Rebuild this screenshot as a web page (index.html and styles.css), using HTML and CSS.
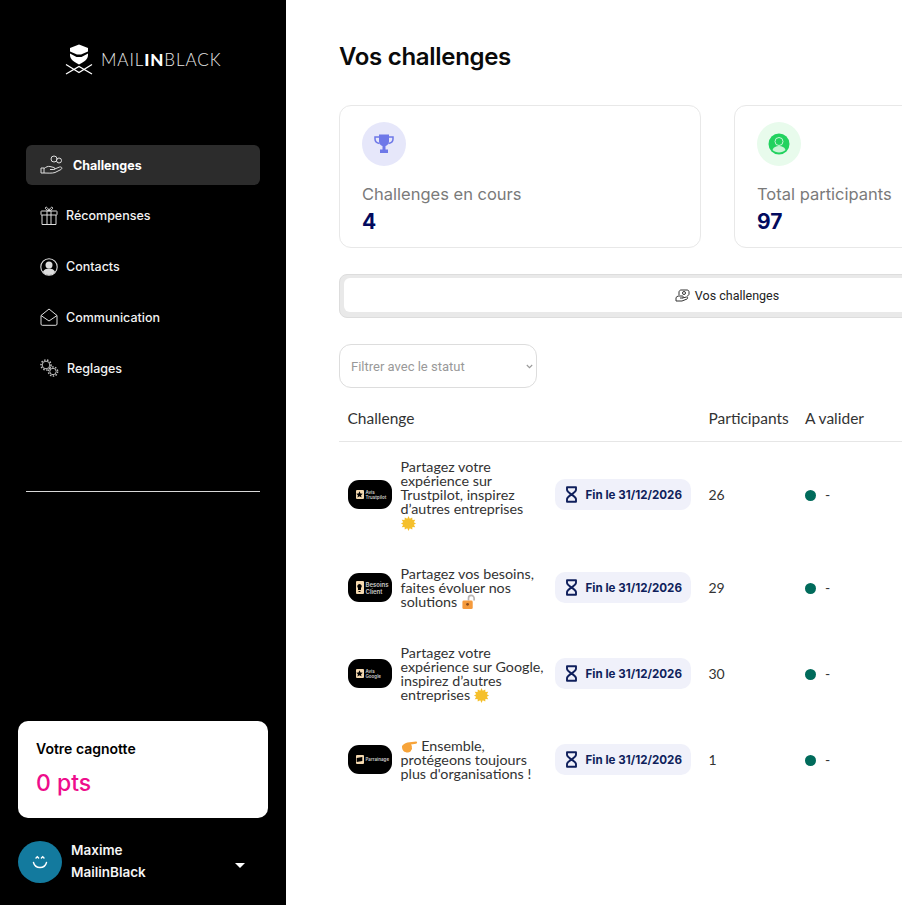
FILE: index.html
```html
<!DOCTYPE HTML>
<html lang="en">
  <head>
    <title>Vos challenges</title>
    <meta charset="utf-8">
    <link rel="stylesheet" href="styles.css">
  </head>
  <body>

  <div class="sidebar">
    <div class="brand">
      <svg class="brand-mark" width="28" height="31" viewBox="0 0 28 31">
        <path d="M5 4l9-3.500L23 4v7c0 4.500-4 7-9 9.500C9 18 5 15.500 5 11z" fill="#fff"/>
        <path d="M5 7.500l7 3h4l7-3v2l-6.500 3.500h-5L5 9.500z" fill="#000"/>
        <path d="M1 20.500l13 8 13-8M1 30l13-7.500L27 30" fill="none" stroke="#fff" stroke-width="1.300"/>
      </svg>
      <span class="brand-name">MAIL<b>IN</b>BLACK</span>
    </div>

    <div class="nav">
      <a class="nav-item active">
        <svg width="24" height="20" viewBox="0 0 24 20" fill="none" stroke="#ddd" stroke-width="1">
          <path d="M1 13h3v5H1zM4 13.500c2-1.500 4-2.500 6-2l4 1c1.500.5 1 2-.5 2H10M13.500 14.500l6-2.500c2.500-.5 3 1.500 1.500 2.500l-6 3c-3 1-7 .5-11 .5"/>
          <circle cx="14" cy="4" r="3"/>
          <circle cx="19" cy="5.500" r="2.500"/>
        </svg>
        <span>Challenges</span>
      </a>
      <a class="nav-item">
        <svg width="18" height="20" viewBox="0 0 18 20" fill="none" stroke="#ddd" stroke-width="1">
          <rect x="1" y="5" width="16" height="4" rx=".5"/>
          <path d="M2 9v9.500h14V9M7 5v13.500M11 5v13.500M9 5C6 4 5 2.500 5.500 1.500 6.500.5 8 2 9 5c1-3 2.500-4.500 3.500-3.500C13 2.500 12 4 9 5z"/>
        </svg>
        <span>Récompenses</span>
      </a>
      <a class="nav-item">
        <svg width="18" height="18" viewBox="0 0 18 18">
          <circle cx="9" cy="9" r="8.200" fill="none" stroke="#ddd" stroke-width="1.100"/>
          <circle cx="9" cy="7" r="3.500" fill="#ddd"/>
          <path d="M2.800 14c1-2.500 3.500-3.500 6.200-3.500s5.200 1 6.200 3.500c-1.500 2-3.700 3-6.200 3s-4.700-1-6.200-3z" fill="#ddd"/>
        </svg>
        <span>Contacts</span>
      </a>
      <a class="nav-item">
        <svg width="18" height="18" viewBox="0 0 18 18" fill="none" stroke="#ddd" stroke-width="1">
          <path d="M1 7.500L9 1l8 6.500V16c0 .8-.5 1.300-1.300 1.300H2.300C1.500 17.300 1 16.800 1 16z"/>
          <path d="M1 7.500l8 5.500 8-5.500"/>
        </svg>
        <span>Communication</span>
      </a>
      <a class="nav-item">
        <svg width="19" height="18" viewBox="0 0 19 18" fill="none" stroke="#bbb">
          <circle cx="6" cy="6" r="3.800" stroke-width="1"/>
          <circle cx="6" cy="6" r="5" stroke-width="1.600" stroke-dasharray="1.500 1.500"/>
          <circle cx="13" cy="12.500" r="3.200" stroke-width="1"/>
          <circle cx="13" cy="12.500" r="4.600" stroke-width="1.500" stroke-dasharray="1.500 1.400"/>
        </svg>
        <span>Reglages</span>
      </a>
    </div>

    <div class="sidebar-line"></div>

    <div class="wallet">
      <div class="wallet-title">Votre cagnotte</div>
      <div class="wallet-points">0 pts</div>
    </div>

    <div class="user">
      <div class="avatar">
        <svg width="18" height="16" viewBox="0 0 18 16" fill="none" stroke="#fff" stroke-width="1.400" stroke-linecap="round">
          <path d="M5 4l1.300-1.300L7.600 4M10.400 4l1.300-1.300L13 4M2.500 8.500c.8 3 3.500 5 6.500 5s5.700-2 6.500-5"/>
        </svg>
      </div>
      <div class="user-name">Maxime<br>MailinBlack</div>
      <div class="caret"></div>
    </div>
  </div>

  <div class="main">
    <div class="content">
      <h1>Vos challenges</h1>

      <div class="stats">
        <div class="stat">
          <div class="stat-icon purple">
            <svg width="20" height="20" viewBox="0 0 20 20" fill="#6e78e8">
              <path d="M5 .5h10v7c0 2.500-2 4-3.500 4.500v3.500H14V19H6v-3.500h2.500V12C7 11.500 5 10 5 7.500z"/>
              <path d="M5 3H1v2c0 2.500 2 4 4.500 4.500M15 3h4v2c0 2.500-2 4-4.500 4.500" fill="none" stroke="#6e78e8" stroke-width="1.500"/>
            </svg>
          </div>
          <div class="stat-label">Challenges en cours</div>
          <div class="stat-value">4</div>
        </div>
        <div class="stat">
          <div class="stat-icon green">
            <svg width="22" height="22" viewBox="0 0 22 22">
              <circle cx="11" cy="11" r="10.500" fill="#22d25f"/>
              <path d="M4.500 17c1-3 3.500-4 6.500-4s5.500 1 6.500 4c-1.500 1.500-4 2.500-6.500 2.500s-5-1-6.500-2.500z" fill="#c9f5d6"/>
              <circle cx="11" cy="8.500" r="4" fill="#22d25f" stroke="#c9f5d6"/>
            </svg>
          </div>
          <div class="stat-label">Total participants</div>
          <div class="stat-value">97</div>
        </div>
      </div>

      <div class="tabs">
        <div class="tab">
          <svg width="15" height="13" viewBox="0 0 15 13" fill="none" stroke="#333" stroke-width="1">
            <path d="M1 12V8.500l2-1.500h4.500c1 0 1 2 0 2H5M7.500 9l4-1c1.500 0 1.500 1.500.5 2l-5 2H1"/>
            <path d="M4 6V3c0-1 1-2 2-2h6c1.500 0 2 1 2 2v2c0 1-1 2-2 2"/>
            <circle cx="9" cy="4" r="1.500"/>
          </svg>
          Vos challenges
        </div>
      </div>

      <div class="filter-wrap">
        <select class="filter">
          <option>Filtrer avec le statut</option>
        </select>
        <svg class="filter-arrow" width="7" height="5" viewBox="0 0 7 5"><path d="M.8 1l2.700 2.700L6.200 1" fill="none" stroke="#999" stroke-width="1.100"/></svg>
      </div>

      <table class="challenges">
        <thead>
          <tr>
            <th class="col-challenge">Challenge</th>
            <th class="col-count">Participants</th>
            <th>A valider</th>
          </tr>
        </thead>
        <tbody>
          <tr>
            <td>
              <div class="challenge">
                <div class="thumb">
                  <i class="thumb-icon"><svg width="7" height="7" viewBox="0 0 10 10"><path d="M5 .5l1.400 3 3.300.3-2.500 2.200.8 3.300L5 7.500 2 9.300l.8-3.300L.3 3.800l3.300-.3z" fill="#000"/></svg></i>
                  <span>Avis<br>Trustpilot</span>
                </div>
                <div class="challenge-text">Partagez votre expérience sur Trustpilot, inspirez d’autres entreprises<br><svg class="emoji" width="15" height="15" viewBox="0 0 16 16"><use href="#sun"/></svg></div>
                <div class="due">
                  <svg width="13" height="17" viewBox="0 0 13 17"><use href="#hourglass"/></svg>
                  Fin le 31/12/2026
                </div>
              </div>
            </td>
            <td>26</td>
            <td><span class="dot"></span>-</td>
          </tr>
          <tr>
            <td>
              <div class="challenge">
                <div class="thumb large">
                  <i class="thumb-icon tall"><svg width="7" height="10" viewBox="0 0 7 10"><path d="M3.500 1a2.300 2.300 0 0 1 1.500 4v2H2V5a2.300 2.300 0 0 1 1.500-4zM2.500 8h2v1h-2z" fill="#000"/></svg></i>
                  <span>Besoins<br>Client</span>
                </div>
                <div class="challenge-text">Partagez vos besoins, faites évoluer nos solutions <svg class="emoji" width="15" height="16" viewBox="0 0 16 17"><path d="M8 7V4.500a3 3 0 0 1 6 0V7" fill="none" stroke="#b9b4b4" stroke-width="1.800"/><rect x="1.500" y="7" width="11" height="9" rx="1.500" fill="#f59a3c"/><circle cx="7" cy="11" r="1.500" fill="#8a4a1a"/></svg></div>
                <div class="due">
                  <svg width="13" height="17" viewBox="0 0 13 17"><use href="#hourglass"/></svg>
                  Fin le 31/12/2026
                </div>
              </div>
            </td>
            <td>29</td>
            <td><span class="dot"></span>-</td>
          </tr>
          <tr>
            <td>
              <div class="challenge">
                <div class="thumb">
                  <i class="thumb-icon"><svg width="7" height="7" viewBox="0 0 10 10"><path d="M5 .5l1.400 3 3.300.3-2.500 2.200.8 3.300L5 7.500 2 9.300l.8-3.300L.3 3.800l3.300-.3z" fill="#000"/></svg></i>
                  <span>Avis<br>Google</span>
                </div>
                <div class="challenge-text">Partagez votre expérience sur Google, inspirez d’autres entreprises <svg class="emoji" width="15" height="15" viewBox="0 0 16 16"><use href="#sun"/></svg></div>
                <div class="due">
                  <svg width="13" height="17" viewBox="0 0 13 17"><use href="#hourglass"/></svg>
                  Fin le 31/12/2026
                </div>
              </div>
            </td>
            <td>30</td>
            <td><span class="dot"></span>-</td>
          </tr>
          <tr>
            <td>
              <div class="challenge">
                <div class="thumb">
                  <i class="thumb-icon"><svg width="7" height="7" viewBox="0 0 10 10"><path d="M1 3l8-1.500V7L1 8.500z" fill="#000"/></svg></i>
                  <span>Parrainage</span>
                </div>
                <div class="challenge-text"><svg class="emoji" width="17" height="14" viewBox="0 0 17 14"><path d="M1 6c1.500-2 3.500-3 5.500-3.500L15 1.500c1.500 0 1.500 2 0 2.200L10 4.500c.8.800 1 2 .8 3 .5 1 .2 2-.5 2.500-.3 1.500-1.500 2.500-3.500 2.500-3.500 0-6-2-5.800-6.500z" fill="#f7a43a"/></svg> Ensemble, protégeons toujours plus d'organisations !</div>
                <div class="due">
                  <svg width="13" height="17" viewBox="0 0 13 17"><use href="#hourglass"/></svg>
                  Fin le 31/12/2026
                </div>
              </div>
            </td>
            <td>1</td>
            <td><span class="dot"></span>-</td>
          </tr>
        </tbody>
      </table>
    </div>
  </div>

  <svg class="defs" width="0" height="0">
    <symbol id="sun" viewBox="0 0 16 16">
      <path d="M8 0l1.300 3L12 1.500l.2 2.800 3-.2-1.500 2.600L16 8l-2.300 1.300 1.500 2.600-3-.2-.2 2.800L9.300 13 8 16l-1.300-3L4 14.500l-.2-2.800-3 .2 1.500-2.600L0 8l2.300-1.300L.8 4.100l3 .2L4 1.500 6.700 3z" fill="#f5c02c"/>
    </symbol>
    <symbol id="hourglass" viewBox="0 0 13 17">
      <path d="M2 1.200h9v2.600c0 2-2.500 3.200-4.500 4.700C4.500 7 2 5.800 2 3.800zM2 15.800h9v-2.600c0-2-2.500-3.200-4.500-4.700C4.500 10 2 11.200 2 13.200z" fill="none" stroke="#0f1f5c" stroke-width="1.900" stroke-linejoin="round"/>
    </symbol>
  </svg>

  </body>
</html>
```

FILE: styles.css
```css
html {
  height: 100%;
}
body {
  margin: 0;
  padding: 0;
  height: 100%;
  display: flex;
  overflow: hidden;
  background: #ffffff;
  color: #333333;
  font-family: "Lato", sans-serif;
}

.defs {
  position: absolute;
}

/* sidebar */
.sidebar {
  width: 286px;
  flex: none;
  box-sizing: border-box;
  height: 905px;
  padding: 44px 18px 22px;
  display: flex;
  flex-direction: column;
  background: #000000;
  color: #ffffff;
  font-family: "Inter", sans-serif;
}

.brand {
  display: flex;
  align-items: center;
  padding-left: 47px;
  gap: 8px;
  height: 31px;
}
.brand-name {
  font-family: "Lato", sans-serif;
  font-weight: 300;
  font-size: 17px;
  letter-spacing: 0.900px;
  color: #e8e8e8;
}
.brand-name b {
  font-weight: 900;
  color: #ffffff;
}

.nav {
  margin: 70px 8px 0;
  display: flex;
  flex-direction: column;
  gap: 10.800px;
}
.nav-item {
  height: 40px;
  padding-left: 14px;
  display: flex;
  align-items: center;
  gap: 8px;
  border-radius: 6px;
  font-size: 12.500px;
  font-weight: 500;
  color: #f2f2f2;
}
.nav-item.active {
  background: #2c2c2c;
  font-weight: 700;
  color: #ffffff;
  gap: 9px;
}

.sidebar-line {
  margin: 103px 8px 0;
  height: 1px;
  background: #d8d8d8;
}

.wallet {
  margin-top: auto;
  height: 97px;
  box-sizing: border-box;
  padding: 20px 18px;
  border-radius: 10px;
  background: #ffffff;
  color: #000000;
}
.wallet-title {
  font-size: 14px;
  font-weight: 600;
  line-height: 16px;
}
.wallet-points {
  margin-top: 12px;
  font-size: 23px;
  font-weight: 500;
  line-height: 28px;
  color: #ee0d8c;
}

.user {
  margin-top: 21px;
  display: flex;
  align-items: center;
  gap: 9px;
}
.avatar {
  width: 44px;
  height: 42px;
  flex: none;
  margin-top: 2px;
  display: flex;
  align-items: center;
  justify-content: center;
  border-radius: 50%;
  background: #137a9e;
}
.user-name {
  font-size: 13.500px;
  font-weight: 600;
  line-height: 22px;
  color: #f5f5f5;
}
.caret {
  margin: 8px 23px 0 auto;
  width: 0;
  height: 0;
  border-left: 5px solid transparent;
  border-right: 5px solid transparent;
  border-top: 5px solid #ffffff;
}

/* main part */
.main {
  flex: 1;
  min-width: 0;
  overflow: hidden;
  padding-left: 53px;
}
.content {
  width: 776px;
}

h1 {
  margin: 41px 0 0;
  font-family: "Inter", sans-serif;
  font-size: 24px;
  font-weight: 600;
  line-height: 32px;
  letter-spacing: -0.300px;
  color: #0a0a0a;
}

.stats {
  margin-top: 32px;
  display: flex;
  gap: 33px;
}
.stat {
  width: 362px;
  flex: none;
  height: 143px;
  box-sizing: border-box;
  padding: 16px 22px;
  border: 1px solid #e8e8e8;
  border-radius: 12px;
}
.stat-icon {
  width: 44px;
  height: 44px;
  display: flex;
  align-items: center;
  justify-content: center;
  border-radius: 50%;
}
.stat-icon.purple {
  background: #e6e7fa;
}
.stat-icon.green {
  background: #e8fbec;
}
.stat-label {
  margin-top: 17px;
  font-family: "Inter", sans-serif;
  font-size: 16.500px;
  line-height: 22px;
  color: #7a7a7a;
}
.stat-value {
  margin-top: 3px;
  font-family: "Inter", sans-serif;
  font-size: 21px;
  font-weight: 700;
  line-height: 28px;
  color: #020a5e;
}

.tabs {
  margin-top: 26px;
  box-sizing: border-box;
  height: 44px;
  padding: 3px 4px 5px;
  border: 1px solid #dddddd;
  border-radius: 8px;
  background: #e9e9e9;
}
.tab {
  height: 100%;
  display: flex;
  align-items: center;
  justify-content: center;
  gap: 5px;
  border-radius: 6px;
  background: #ffffff;
  font-family: "Roboto", sans-serif;
  font-size: 12.500px;
  color: #222222;
}

.filter-wrap {
  position: relative;
  margin-top: 26px;
  width: 198px;
  height: 44px;
}
.filter {
  display: block;
  width: 100%;
  height: 100%;
  padding: 0 11px;
  appearance: none;
  border: 1px solid #dddddd;
  border-radius: 12px;
  background: #ffffff;
  font-family: "Roboto", sans-serif;
  font-size: 13px;
  color: #999999;
}
.filter-arrow {
  position: absolute;
  right: 4px;
  top: 20px;
}

.challenges {
  margin-top: 10px;
  width: 100%;
  table-layout: fixed;
  border-collapse: collapse;
  font-size: 15.500px;
}
.challenges th {
  height: 39px;
  padding: 0 8.500px 4px;
  text-align: left;
  font-weight: 400;
  color: #333333;
  border-bottom: 1px solid #e6e6e6;
}
.challenges th.col-challenge {
  width: 344px;
}
.challenges th.col-count {
  width: 79.500px;
}
.challenges td {
  padding: 17.500px 8.500px 19.500px;
  vertical-align: middle;
  font-size: 14px;
  color: #333333;
}

.challenge {
  display: flex;
  align-items: center;
}
.thumb {
  width: 44px;
  height: 29px;
  flex: none;
  box-sizing: border-box;
  padding-left: 8px;
  display: flex;
  align-items: center;
  gap: 2px;
  border-radius: 11px;
  background: #000000;
  color: #cccccc;
  font-family: "Inter", sans-serif;
  font-size: 4.500px;
  font-weight: 600;
  line-height: 5px;
}
.thumb.large {
  font-size: 6px;
  line-height: 7px;
}
.thumb-icon {
  width: 8px;
  height: 9px;
  flex: none;
  display: flex;
  align-items: center;
  justify-content: center;
  border-radius: 1px;
  background: #f5d9b0;
}
.thumb-icon.tall {
  width: 8px;
  height: 13px;
}
.challenge-text {
  width: 144px;
  flex: none;
  margin-left: 9px;
  font-size: 14.300px;
  line-height: 14px;
  color: #333333;
}
.emoji {
  margin-top: -4px;
  margin-bottom: -4px;
  vertical-align: 1px;
}
.due {
  margin-left: 10px;
  width: 136px;
  height: 31px;
  flex: none;
  box-sizing: border-box;
  padding-left: 10px;
  display: flex;
  align-items: center;
  gap: 8px;
  border-radius: 10px;
  background: #f0f1fa;
  font-family: "Inter", sans-serif;
  font-size: 11.600px;
  font-weight: 700;
  color: #0f1f5c;
}
.dot {
  display: inline-block;
  width: 11px;
  height: 11px;
  margin-right: 9px;
  vertical-align: -1px;
  border-radius: 50%;
  background: #006b5b;
}
```
